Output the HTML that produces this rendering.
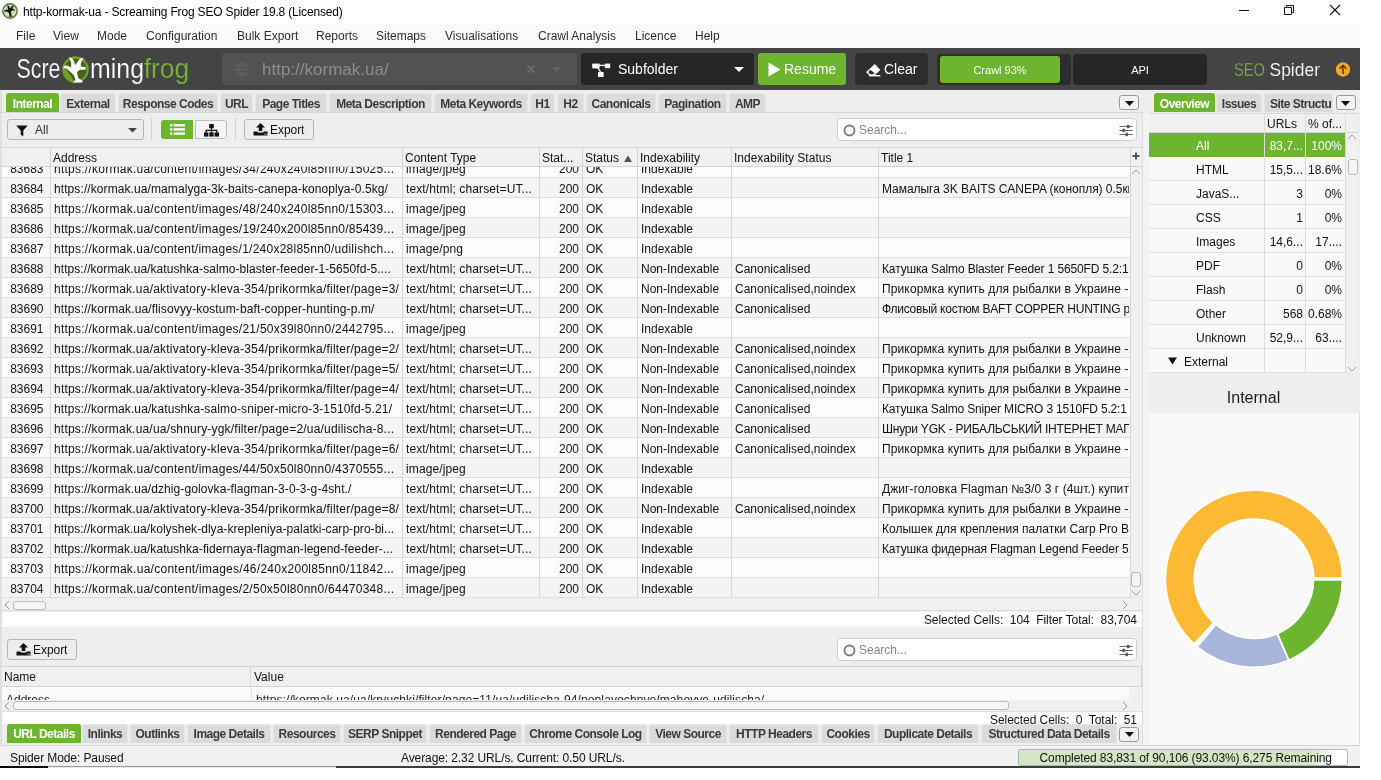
<!DOCTYPE html>
<html lang="en"><head><meta charset="utf-8"><title>http-kormak-ua - Screaming Frog SEO Spider 19.8 (Licensed)</title>
<style>
*{box-sizing:border-box;margin:0;padding:0}
html,body{width:1381px;height:780px;overflow:hidden;background:#fff}
body{font-family:"Liberation Sans",Arial,sans-serif;font-size:12px;color:#111;position:relative}
#app div,#app span{position:absolute;white-space:nowrap}
#app{position:absolute;left:0;top:0;width:1360px;height:768px;background:#eeeeee;overflow:hidden}
#w{left:0;top:0;width:1360px;height:768px;will-change:transform}
#titlebar{left:0;top:0;width:1360px;height:24px;background:#fff}
#titlebar .t{left:23px;top:0;line-height:25px;font-size:12px;letter-spacing:-0.17px;color:#000}
#menubar{left:0;top:24px;width:1360px;height:24px;background:#fbfbfb}
#menubar span{top:0;line-height:25px;font-size:12px;color:#2e2e2e}
#toolbar{left:0;top:48px;width:1360px;height:42px;background:#444444}
#toolbar .box{border-radius:3px}
#toolbar .lbl{color:#fff;font-size:14px;top:0;line-height:33px}
.tab{background:#dbdbdb;color:#3a3a3a;font-weight:700;font-size:12px;letter-spacing:-0.5px;text-align:center;border-radius:3px 3px 0 0;border:1px solid #e6e6e6;border-bottom:none}
.tab.act{background:#6db52f;color:#fff;border-color:#6db52f}
.hline{height:1px;background:#d6d6d6}
.btn{border:1px solid #b4b4b4;border-radius:3px;background:#ededed}
.dropbtn{width:20px;height:15px;border:1px solid #9a9a9a;border-radius:3px;background:#f3f3f3}
.search{left:837px;width:300px;height:23px;background:#fff;border:1px solid #cfcfcf;border-radius:4px}
.search .ph{left:21px;top:0;line-height:22px;color:#858585;font-size:12px}
#grid{left:2px;top:146.5px;width:1140px;height:451px;background:#fff;overflow:hidden}
#grid .r{left:0;width:1128px;height:20px;border-bottom:1px solid #dedede}
#grid .r.a{background:#f4f4f4}
#grid .r.b{background:#fcfcfc}
#grid .c{top:0;height:19px;line-height:22px;overflow:hidden;font-size:12px;color:#111}
#grid .c.n{text-align:right}
#grid .h{top:0;height:20.5px;background:#f0f0f0;border-right:1px solid #d2d2d2;border-bottom:1px solid #d2d2d2;border-top:1px solid #d9d9d9;z-index:3}
#grid .h span{left:2px;top:0;line-height:21px;font-size:12px;color:#111}
.vl{width:1px;background:#d6d6d6;z-index:2}
.vl2{width:1px;background:#dcdcdc;z-index:2}
.ovr{left:1149px;width:196px;height:24px;border-bottom:1px solid #e0e0e0;background:#f9f9f9}
  .ovr span{top:0;line-height:27px;font-size:12px}
.ovr .u{left:116px;width:38px;text-align:right}
.ovr .p{left:157px;width:36px;text-align:right}
.ovr.act{background:#6db52f;color:#fff;border-bottom-color:#6db52f}
.sb{background:#f0f0f0}
.thumb{background:#f6f6f6;border:1px solid #b9b9b9;border-radius:3px}
.chev{font-size:11px;color:#8a8a8a;line-height:12px}
</style></head><body>
<div id="app"><div id="w">
<div id="titlebar">
<svg style="position:absolute;left:2px;top:3px" width="16" height="16" viewBox="0 0 16 16"><circle cx="8" cy="8" r="7.2" fill="#cfdcb4" stroke="#5d7431" stroke-width="1.4"/><path d="M5.2 2.2 L7 3 L8 5.6 L10.6 2.6 L11.8 3 L10.4 5.6 L12.6 6.6 L12.8 7.6 L10 7.4 L9 9 L9.4 12.4 L11.4 13.6 L6.6 13.8 L7.6 12.4 L6.6 9.4 L4.4 8.2 L2.4 9 L2.2 7.8 L4.6 6.4 L6.4 6.8 L5.6 4.4 Z" fill="#0c1405"/></svg>
<span class="t">http-kormak-ua - Screaming Frog SEO Spider 19.8 (Licensed)</span>
<svg style="position:absolute;left:1235px;top:0" width="110" height="24" viewBox="0 0 110 24"><g stroke="#111" stroke-width="1" fill="none"><path d="M4 10.5H14"/><path d="M49.5 7.5H56.5V14.5H49.5Z"/><path d="M51.5 7.5V5.5H58.5V12.5H56.5"/><path d="M95 5L105 15M105 5L95 15" stroke-width="1.1"/></g></svg>
</div>
<div id="menubar"><span style="left:16px">File</span><span style="left:53px">View</span><span style="left:97px">Mode</span><span style="left:146px">Configuration</span><span style="left:237px">Bulk Export</span><span style="left:316px">Reports</span><span style="left:376px">Sitemaps</span><span style="left:445px">Visualisations</span><span style="left:538px">Crawl Analysis</span><span style="left:635px">Licence</span><span style="left:695px">Help</span></div>
<div id="toolbar">
<svg style="position:absolute;left:14px;top:5px" width="180" height="34" viewBox="0 0 180 34">
<text x="2.5" y="25.2" font-family="Liberation Sans, Arial, sans-serif" font-size="28" fill="#fff" stroke="#444" stroke-width="0.2" textLength="44" lengthAdjust="spacingAndGlyphs">Scre</text>
<circle cx="61.5" cy="16.6" r="12.2" fill="#47641c" stroke="#6ea525" stroke-width="2.2"/>
<path d="M49.8 13 A12.2 12.2 0 0 0 60 28.6 L56 22 Z" fill="#6ea525"/>
<path d="M55 4.2 L58.6 5.4 L61.4 12 L66 5.6 L69.6 5 L67.2 9.2 L66.6 13.4 L71.8 14 L71.4 16.8 L66 16.8 L63 19 L64.2 25 L68.4 27.8 L68.6 29.6 L59 29.6 L61.4 27 L60.2 22.4 L56 18.4 L51.6 15 L49.4 15.6 L49.8 13 L53.2 12.4 L57.2 14.4 L57.2 9.4 Z" fill="#fff"/>
<text x="76" y="25.2" font-family="Liberation Sans, Arial, sans-serif" font-size="28" fill="#fff" stroke="#444" stroke-width="0.2" textLength="54" lengthAdjust="spacingAndGlyphs">ming</text>
<text x="129.7" y="25.2" font-family="Liberation Sans, Arial, sans-serif" font-size="28" fill="#76b531" stroke="#444" stroke-width="0.2" textLength="45.5" lengthAdjust="spacingAndGlyphs">frog</text>
</svg>
<div class="box" style="left:222px;top:5px;width:355px;height:32px;background:#525252">
<svg style="position:absolute;left:12px;top:9px" width="15" height="15" viewBox="0 0 15 15"><circle cx="7.5" cy="7.5" r="7" fill="#5e5e5e"/><path d="M1 5.5H14M1 9.5H14" stroke="#525252" stroke-width="1.4"/></svg>
<span style="left:40px;top:0;line-height:33px;font-size:17px;color:#8d8d8d">http://kormak.ua/</span>
<svg style="position:absolute;left:304px;top:11px" width="10" height="10" viewBox="0 0 10 10"><path d="M1.5 1.5L8.5 8.5M8.5 1.5L1.5 8.5" stroke="#6b6b6b" stroke-width="2.2"/></svg>
<svg style="position:absolute;left:330px;top:14px" width="9" height="5" viewBox="0 0 9 5"><path d="M0 0H9L4.5 5Z" fill="#666"/></svg>
</div>
<div class="box" style="left:581px;top:5px;width:173px;height:32px;background:#262626">
<svg style="position:absolute;left:11px;top:9px" width="19" height="15" viewBox="0 0 19 15"><g fill="#fff"><rect x="0.2" y="1.6" width="7.4" height="4.8"/><rect x="12.8" y="1.6" width="5.4" height="4.6"/><rect x="6" y="10" width="5.6" height="5"/></g><path d="M5 3.4H13.5M5.5 5L8.8 10.5" stroke="#fff" stroke-width="1.4" fill="none"/></svg>
<span class="lbl" style="left:37px">Subfolder</span>
<svg style="position:absolute;left:153px;top:14px" width="10" height="5" viewBox="0 0 10 5"><path d="M0 0H10L5 5Z" fill="#fff"/></svg>
</div>
<div class="box" style="left:758px;top:5px;width:88px;height:32px;background:#6db52f">
<svg style="position:absolute;left:10px;top:9px" width="13" height="15" viewBox="0 0 13 15"><path d="M0.5 0.5 L12.5 7.5 L0.5 14.5 Z" fill="#fff"/></svg>
<span class="lbl" style="left:26px">Resume</span>
</div>
<div class="box" style="left:855px;top:5px;width:73px;height:32px;background:#2d2d2d;border-radius:4px">
<svg style="position:absolute;left:11px;top:10.5px" width="15" height="13" viewBox="0 0 15 13"><path d="M8.8 0 L14.3 5.9 L9 11 H3.2 L0 8.3 Z" fill="#fff"/><path d="M4.3 5.8 L8.6 9.3 L7.4 10.3 H4.2 L2.1 8.3 Z" fill="#2d2d2d"/><path d="M3 11.7 H14.3" stroke="#fff" stroke-width="1.4"/></svg>
<span class="lbl" style="left:29px">Clear</span>
</div>
<div class="box" style="left:937px;top:6px;width:134px;height:31px;background:#2d2d2d;border-radius:4px"></div>
<div class="box" style="left:940px;top:8px;width:120px;height:27px;background:#6db52f"><span style="left:0;width:120px;text-align:center;top:0;line-height:28px;font-size:11px;color:#fff">Crawl 93%</span></div>
<div class="box" style="left:1073px;top:6px;width:134px;height:31px;background:#262626;border-radius:4px"><span style="left:0;width:134px;text-align:center;top:0;line-height:32px;font-size:11px;color:#fff">API</span></div>
<svg style="position:absolute;left:1230px;top:8px" width="125" height="30" viewBox="0 0 125 30">
<text x="4" y="19.8" font-family="Liberation Sans, Arial, sans-serif" font-size="18" fill="#8ab34a" stroke="#444" stroke-width="0.35" textLength="31" lengthAdjust="spacingAndGlyphs">SEO</text>
<text x="39.5" y="19.8" font-family="Liberation Sans, Arial, sans-serif" font-size="18" fill="#fff" stroke="#444" stroke-width="0.15" textLength="50.5" lengthAdjust="spacingAndGlyphs">Spider</text>
<circle cx="113" cy="13.5" r="7.2" fill="#f5a623"/><path d="M113 18V10M109.6 12.8L113 9.4L116.4 12.8" stroke="#4a3a1a" stroke-width="1.5" fill="none"/>
</svg>
</div>
<!-- left edge strip -->
<div style="left:0;top:90px;width:2px;height:655px;background:#e0e0e0"></div>
<!-- top tabs -->
<div class="tab act" style="left:6px;top:93px;width:53px;height:19px;line-height:21px">Internal</div>
<div class="tab" style="left:60px;top:93px;width:56px;height:19px;line-height:21px">External</div>
<div class="tab" style="left:118px;top:93px;width:100px;height:19px;line-height:21px">Response Codes</div>
<div class="tab" style="left:220px;top:93px;width:33px;height:19px;line-height:21px">URL</div>
<div class="tab" style="left:255px;top:93px;width:72px;height:19px;line-height:21px">Page Titles</div>
<div class="tab" style="left:329px;top:93px;width:103px;height:19px;line-height:21px">Meta Description</div>
<div class="tab" style="left:434px;top:93px;width:94px;height:19px;line-height:21px">Meta Keywords</div>
<div class="tab" style="left:530px;top:93px;width:25px;height:19px;line-height:21px">H1</div>
<div class="tab" style="left:557px;top:93px;width:27px;height:19px;line-height:21px">H2</div>
<div class="tab" style="left:586px;top:93px;width:70px;height:19px;line-height:21px">Canonicals</div>
<div class="tab" style="left:658px;top:93px;width:69px;height:19px;line-height:21px">Pagination</div>
<div class="tab" style="left:729px;top:93px;width:37px;height:19px;line-height:21px">AMP</div>
<div class="dropbtn" style="left:1119px;top:95px"><svg style="position:absolute;left:4.5px;top:4.5px" width="9" height="5" viewBox="0 0 9 5"><path d="M0 0H9L4.5 5Z" fill="#111"/></svg></div>
<div class="hline" style="left:0;top:112px;width:1143px"></div>
<!-- filter row -->
<div class="btn" style="left:7px;top:119px;width:137px;height:21px">
<svg style="position:absolute;left:8px;top:4.5px" width="12" height="12" viewBox="0 0 12 12"><path d="M0.3 0.5 H11.7 L7.3 5.6 V11.5 L4.7 9.6 V5.6 Z" fill="#111"/></svg>
<span style="left:27px;top:0;line-height:20px;color:#333">All</span>
<svg style="position:absolute;left:120px;top:8px" width="9" height="5" viewBox="0 0 9 5"><path d="M0 0H9L4.5 4.6Z" fill="#444"/></svg>
</div>
<div style="left:151px;top:118px;width:1px;height:22px;background:#d3d3d3"></div>
<div style="left:161px;top:120px;width:32px;height:19px;background:#6db52f;border-radius:3px 0 0 3px">
<svg style="position:absolute;left:9px;top:4px" width="15" height="11" viewBox="0 0 15 11"><g fill="#fff"><rect x="0" y="0" width="2.2" height="2.4"/><rect x="3.6" y="0" width="11.4" height="2.4"/><rect x="0" y="4.2" width="2.2" height="2.4"/><rect x="3.6" y="4.2" width="11.4" height="2.4"/><rect x="0" y="8.4" width="2.2" height="2.4"/><rect x="3.6" y="8.4" width="11.4" height="2.4"/></g></svg>
</div>
<div style="left:195px;top:120px;width:32px;height:19px;background:#f5f5f5;border:1px solid #bdbdbd;border-radius:0 3px 3px 0">
<svg style="position:absolute;left:8px;top:2.5px" width="15" height="13" viewBox="0 0 15 13"><g fill="#111"><rect x="5.2" y="0" width="4.6" height="4.2"/><rect x="0" y="8.4" width="4.4" height="4.2"/><rect x="5.3" y="8.4" width="4.4" height="4.2"/><rect x="10.6" y="8.4" width="4.4" height="4.2"/></g><path d="M7.5 4V8.4M2.2 8.4V6.3H12.8V8.4" stroke="#111" stroke-width="1.3" fill="none"/></svg>
</div>
<div style="left:235px;top:118px;width:1px;height:22px;background:#d3d3d3"></div>
<div class="btn" style="left:244px;top:119px;width:70px;height:21px"><svg style="position:absolute;left:8px;top:3px" width="15" height="13" viewBox="0 0 15 13"><path d="M7.5 0 L12 4.6 H9.3 V8 H5.7 V4.6 H3 Z" fill="#111"/><path d="M0.5 8.6 H4.6 V9.4 H10.4 V8.6 H14.5 V12.6 H0.5 Z" fill="#111"/><rect x="11.3" y="10.6" width="1" height="1" fill="#eee"/><rect x="12.8" y="10.6" width="1" height="1" fill="#eee"/></svg><span style="left:25px;top:0;line-height:20px;letter-spacing:-0.05px">Export</span></div>
<div class="search" style="top:118px"><svg style="position:absolute;left:5px;top:5px" width="13" height="13" viewBox="0 0 13 13"><circle cx="6.5" cy="6.5" r="5" fill="none" stroke="#7c7c7c" stroke-width="1.8"/></svg><span class="ph">Search...</span><svg style="position:absolute;left:281px;top:5px" width="14" height="13" viewBox="0 0 14 13"><g stroke="#666" stroke-width="1.2" fill="none"><path d="M0.5 2.5H13.5M0.5 6.5H13.5M0.5 10.5H13.5"/></g><g fill="#555"><rect x="8" y="0.8" width="2.4" height="3.4"/><rect x="3.5" y="4.8" width="2.4" height="3.4"/><rect x="6.5" y="8.8" width="2.4" height="3.4"/></g></svg></div>
<!-- grid -->
<div id="grid">
<div class="h" style="left:0px;width:49px"><span></span></div>
<div class="h" style="left:49px;width:352px"><span>Address</span></div>
<div class="h" style="left:401px;width:137px"><span>Content Type</span></div>
<div class="h" style="left:538px;width:43px"><span>Stat...</span></div>
<div class="h" style="left:581px;width:55px"><span>Status</span><svg style="position:absolute;left:40px;top:7px" width="10" height="8" viewBox="0 0 10 8"><path d="M1 7 L5 0.5 L9 7 Z" fill="#555"/></svg></div>
<div class="h" style="left:636px;width:94px"><span>Indexability</span></div>
<div class="h" style="left:730px;width:147px"><span>Indexability Status</span></div>
<div class="h" style="left:877px;width:252px"><span>Title 1</span></div>
<div class="h" style="left:1129px;width:12px"><span></span></div>
<div class="r b" style="top:11.5px"><span class="c n" style="left:0;width:41.5px">83683</span><span class="c" style="left:52px;width:349px;letter-spacing:0.253px">https://kormak.ua/content/images/34/240x240l85nn0/15025...</span><span class="c" style="left:404px;width:134px;letter-spacing:0.12px">image/jpeg</span><span class="c n" style="left:538px;width:39px">200</span><span class="c" style="left:584px;width:52px">OK</span><span class="c" style="left:639px;width:92px">Indexable</span><span class="c" style="left:733px;width:144px"></span><span class="c" style="left:880px;width:247px;letter-spacing:0px"></span></div>
<div class="r a" style="top:31.5px"><span class="c n" style="left:0;width:41.5px">83684</span><span class="c" style="left:52px;width:349px;letter-spacing:0.088px">https://kormak.ua/mamalyga-3k-baits-canepa-konoplya-0.5kg/</span><span class="c" style="left:404px;width:134px;letter-spacing:0.12px">text/html; charset=UT...</span><span class="c n" style="left:538px;width:39px">200</span><span class="c" style="left:584px;width:52px">OK</span><span class="c" style="left:639px;width:92px">Indexable</span><span class="c" style="left:733px;width:144px"></span><span class="c" style="left:880px;width:247px;letter-spacing:-0.042px">Мамалыга 3K BAITS CANEPA (конопля) 0.5кг</span></div>
<div class="r b" style="top:51.5px"><span class="c n" style="left:0;width:41.5px">83685</span><span class="c" style="left:52px;width:349px;letter-spacing:0.253px">https://kormak.ua/content/images/48/240x240l85nn0/15303...</span><span class="c" style="left:404px;width:134px;letter-spacing:0.12px">image/jpeg</span><span class="c n" style="left:538px;width:39px">200</span><span class="c" style="left:584px;width:52px">OK</span><span class="c" style="left:639px;width:92px">Indexable</span><span class="c" style="left:733px;width:144px"></span><span class="c" style="left:880px;width:247px;letter-spacing:0px"></span></div>
<div class="r a" style="top:71.5px"><span class="c n" style="left:0;width:41.5px">83686</span><span class="c" style="left:52px;width:349px;letter-spacing:0.253px">https://kormak.ua/content/images/19/240x200l85nn0/85439...</span><span class="c" style="left:404px;width:134px;letter-spacing:0.12px">image/jpeg</span><span class="c n" style="left:538px;width:39px">200</span><span class="c" style="left:584px;width:52px">OK</span><span class="c" style="left:639px;width:92px">Indexable</span><span class="c" style="left:733px;width:144px"></span><span class="c" style="left:880px;width:247px;letter-spacing:0px"></span></div>
<div class="r b" style="top:91.5px"><span class="c n" style="left:0;width:41.5px">83687</span><span class="c" style="left:52px;width:349px;letter-spacing:0.245px">https://kormak.ua/content/images/1/240x28l85nn0/udilishch...</span><span class="c" style="left:404px;width:134px;letter-spacing:0.12px">image/png</span><span class="c n" style="left:538px;width:39px">200</span><span class="c" style="left:584px;width:52px">OK</span><span class="c" style="left:639px;width:92px">Indexable</span><span class="c" style="left:733px;width:144px"></span><span class="c" style="left:880px;width:247px;letter-spacing:0px"></span></div>
<div class="r a" style="top:111.5px"><span class="c n" style="left:0;width:41.5px">83688</span><span class="c" style="left:52px;width:349px;letter-spacing:0.064px">https://kormak.ua/katushka-salmo-blaster-feeder-1-5650fd-5....</span><span class="c" style="left:404px;width:134px;letter-spacing:0.12px">text/html; charset=UT...</span><span class="c n" style="left:538px;width:39px">200</span><span class="c" style="left:584px;width:52px">OK</span><span class="c" style="left:639px;width:92px">Non-Indexable</span><span class="c" style="left:733px;width:144px">Canonicalised</span><span class="c" style="left:880px;width:247px;letter-spacing:-0.135px">Катушка Salmo Blaster Feeder 1 5650FD 5.2:1</span></div>
<div class="r b" style="top:131.5px"><span class="c n" style="left:0;width:41.5px">83689</span><span class="c" style="left:52px;width:349px;letter-spacing:0.212px">https://kormak.ua/aktivatory-kleva-354/prikormka/filter/page=3/</span><span class="c" style="left:404px;width:134px;letter-spacing:0.12px">text/html; charset=UT...</span><span class="c n" style="left:538px;width:39px">200</span><span class="c" style="left:584px;width:52px">OK</span><span class="c" style="left:639px;width:92px">Non-Indexable</span><span class="c" style="left:733px;width:144px">Canonicalised,noindex</span><span class="c" style="left:880px;width:247px;letter-spacing:0.123px">Прикормка купить для рыбалки в Украине - </span></div>
<div class="r a" style="top:151.5px"><span class="c n" style="left:0;width:41.5px">83690</span><span class="c" style="left:52px;width:349px;letter-spacing:0.133px">https://kormak.ua/flisovyy-kostum-baft-copper-hunting-p.m/</span><span class="c" style="left:404px;width:134px;letter-spacing:0.12px">text/html; charset=UT...</span><span class="c n" style="left:538px;width:39px">200</span><span class="c" style="left:584px;width:52px">OK</span><span class="c" style="left:639px;width:92px">Non-Indexable</span><span class="c" style="left:733px;width:144px">Canonicalised</span><span class="c" style="left:880px;width:247px;letter-spacing:-0.241px">Флисовый костюм BAFT COPPER HUNTING р.</span></div>
<div class="r b" style="top:171.5px"><span class="c n" style="left:0;width:41.5px">83691</span><span class="c" style="left:52px;width:349px;letter-spacing:0.253px">https://kormak.ua/content/images/21/50x39l80nn0/2442795...</span><span class="c" style="left:404px;width:134px;letter-spacing:0.12px">image/jpeg</span><span class="c n" style="left:538px;width:39px">200</span><span class="c" style="left:584px;width:52px">OK</span><span class="c" style="left:639px;width:92px">Indexable</span><span class="c" style="left:733px;width:144px"></span><span class="c" style="left:880px;width:247px;letter-spacing:0px"></span></div>
<div class="r a" style="top:191.5px"><span class="c n" style="left:0;width:41.5px">83692</span><span class="c" style="left:52px;width:349px;letter-spacing:0.212px">https://kormak.ua/aktivatory-kleva-354/prikormka/filter/page=2/</span><span class="c" style="left:404px;width:134px;letter-spacing:0.12px">text/html; charset=UT...</span><span class="c n" style="left:538px;width:39px">200</span><span class="c" style="left:584px;width:52px">OK</span><span class="c" style="left:639px;width:92px">Non-Indexable</span><span class="c" style="left:733px;width:144px">Canonicalised,noindex</span><span class="c" style="left:880px;width:247px;letter-spacing:0.123px">Прикормка купить для рыбалки в Украине - </span></div>
<div class="r b" style="top:211.5px"><span class="c n" style="left:0;width:41.5px">83693</span><span class="c" style="left:52px;width:349px;letter-spacing:0.212px">https://kormak.ua/aktivatory-kleva-354/prikormka/filter/page=5/</span><span class="c" style="left:404px;width:134px;letter-spacing:0.12px">text/html; charset=UT...</span><span class="c n" style="left:538px;width:39px">200</span><span class="c" style="left:584px;width:52px">OK</span><span class="c" style="left:639px;width:92px">Non-Indexable</span><span class="c" style="left:733px;width:144px">Canonicalised,noindex</span><span class="c" style="left:880px;width:247px;letter-spacing:0.123px">Прикормка купить для рыбалки в Украине - </span></div>
<div class="r a" style="top:231.5px"><span class="c n" style="left:0;width:41.5px">83694</span><span class="c" style="left:52px;width:349px;letter-spacing:0.212px">https://kormak.ua/aktivatory-kleva-354/prikormka/filter/page=4/</span><span class="c" style="left:404px;width:134px;letter-spacing:0.12px">text/html; charset=UT...</span><span class="c n" style="left:538px;width:39px">200</span><span class="c" style="left:584px;width:52px">OK</span><span class="c" style="left:639px;width:92px">Non-Indexable</span><span class="c" style="left:733px;width:144px">Canonicalised,noindex</span><span class="c" style="left:880px;width:247px;letter-spacing:0.123px">Прикормка купить для рыбалки в Украине - </span></div>
<div class="r b" style="top:251.5px"><span class="c n" style="left:0;width:41.5px">83695</span><span class="c" style="left:52px;width:349px;letter-spacing:0.11px">https://kormak.ua/katushka-salmo-sniper-micro-3-1510fd-5.21/</span><span class="c" style="left:404px;width:134px;letter-spacing:0.12px">text/html; charset=UT...</span><span class="c n" style="left:538px;width:39px">200</span><span class="c" style="left:584px;width:52px">OK</span><span class="c" style="left:639px;width:92px">Non-Indexable</span><span class="c" style="left:733px;width:144px">Canonicalised</span><span class="c" style="left:880px;width:247px;letter-spacing:-0.166px">Катушка Salmo Sniper MICRO 3 1510FD 5.2:1</span></div>
<div class="r a" style="top:271.5px"><span class="c n" style="left:0;width:41.5px">83696</span><span class="c" style="left:52px;width:349px;letter-spacing:0.196px">https://kormak.ua/ua/shnury-ygk/filter/page=2/ua/udilischa-8...</span><span class="c" style="left:404px;width:134px;letter-spacing:0.12px">text/html; charset=UT...</span><span class="c n" style="left:538px;width:39px">200</span><span class="c" style="left:584px;width:52px">OK</span><span class="c" style="left:639px;width:92px">Non-Indexable</span><span class="c" style="left:733px;width:144px">Canonicalised</span><span class="c" style="left:880px;width:247px;letter-spacing:-0.222px">Шнури YGK - РИБАЛЬСЬКИЙ ІНТЕРНЕТ МАГАЗИН</span></div>
<div class="r b" style="top:291.5px"><span class="c n" style="left:0;width:41.5px">83697</span><span class="c" style="left:52px;width:349px;letter-spacing:0.212px">https://kormak.ua/aktivatory-kleva-354/prikormka/filter/page=6/</span><span class="c" style="left:404px;width:134px;letter-spacing:0.12px">text/html; charset=UT...</span><span class="c n" style="left:538px;width:39px">200</span><span class="c" style="left:584px;width:52px">OK</span><span class="c" style="left:639px;width:92px">Non-Indexable</span><span class="c" style="left:733px;width:144px">Canonicalised,noindex</span><span class="c" style="left:880px;width:247px;letter-spacing:0.123px">Прикормка купить для рыбалки в Украине - </span></div>
<div class="r a" style="top:311.5px"><span class="c n" style="left:0;width:41.5px">83698</span><span class="c" style="left:52px;width:349px;letter-spacing:0.253px">https://kormak.ua/content/images/44/50x50l80nn0/4370555...</span><span class="c" style="left:404px;width:134px;letter-spacing:0.12px">image/jpeg</span><span class="c n" style="left:538px;width:39px">200</span><span class="c" style="left:584px;width:52px">OK</span><span class="c" style="left:639px;width:92px">Indexable</span><span class="c" style="left:733px;width:144px"></span><span class="c" style="left:880px;width:247px;letter-spacing:0px"></span></div>
<div class="r b" style="top:331.5px"><span class="c n" style="left:0;width:41.5px">83699</span><span class="c" style="left:52px;width:349px;letter-spacing:0.098px">https://kormak.ua/dzhig-golovka-flagman-3-0-3-g-4sht./</span><span class="c" style="left:404px;width:134px;letter-spacing:0.12px">text/html; charset=UT...</span><span class="c n" style="left:538px;width:39px">200</span><span class="c" style="left:584px;width:52px">OK</span><span class="c" style="left:639px;width:92px">Indexable</span><span class="c" style="left:733px;width:144px"></span><span class="c" style="left:880px;width:247px;letter-spacing:0.088px">Джиг-головка Flagman №3/0 3 г (4шт.) купить</span></div>
<div class="r a" style="top:351.5px"><span class="c n" style="left:0;width:41.5px">83700</span><span class="c" style="left:52px;width:349px;letter-spacing:0.212px">https://kormak.ua/aktivatory-kleva-354/prikormka/filter/page=8/</span><span class="c" style="left:404px;width:134px;letter-spacing:0.12px">text/html; charset=UT...</span><span class="c n" style="left:538px;width:39px">200</span><span class="c" style="left:584px;width:52px">OK</span><span class="c" style="left:639px;width:92px">Non-Indexable</span><span class="c" style="left:733px;width:144px">Canonicalised,noindex</span><span class="c" style="left:880px;width:247px;letter-spacing:0.123px">Прикормка купить для рыбалки в Украине - </span></div>
<div class="r b" style="top:371.5px"><span class="c n" style="left:0;width:41.5px">83701</span><span class="c" style="left:52px;width:349px;letter-spacing:0.042px">https://kormak.ua/kolyshek-dlya-krepleniya-palatki-carp-pro-bi...</span><span class="c" style="left:404px;width:134px;letter-spacing:0.12px">text/html; charset=UT...</span><span class="c n" style="left:538px;width:39px">200</span><span class="c" style="left:584px;width:52px">OK</span><span class="c" style="left:639px;width:92px">Indexable</span><span class="c" style="left:733px;width:144px"></span><span class="c" style="left:880px;width:247px;letter-spacing:0.015px">Колышек для крепления палатки Carp Pro Big</span></div>
<div class="r a" style="top:391.5px"><span class="c n" style="left:0;width:41.5px">83702</span><span class="c" style="left:52px;width:349px;letter-spacing:0.055px">https://kormak.ua/katushka-fidernaya-flagman-legend-feeder-...</span><span class="c" style="left:404px;width:134px;letter-spacing:0.12px">text/html; charset=UT...</span><span class="c n" style="left:538px;width:39px">200</span><span class="c" style="left:584px;width:52px">OK</span><span class="c" style="left:639px;width:92px">Indexable</span><span class="c" style="left:733px;width:144px"></span><span class="c" style="left:880px;width:247px;letter-spacing:-0.129px">Катушка фидерная Flagman Legend Feeder 50</span></div>
<div class="r b" style="top:411.5px"><span class="c n" style="left:0;width:41.5px">83703</span><span class="c" style="left:52px;width:349px;letter-spacing:0.268px">https://kormak.ua/content/images/46/240x200l85nn0/11842...</span><span class="c" style="left:404px;width:134px;letter-spacing:0.12px">image/jpeg</span><span class="c n" style="left:538px;width:39px">200</span><span class="c" style="left:584px;width:52px">OK</span><span class="c" style="left:639px;width:92px">Indexable</span><span class="c" style="left:733px;width:144px"></span><span class="c" style="left:880px;width:247px;letter-spacing:0px"></span></div>
<div class="r a" style="top:431.5px"><span class="c n" style="left:0;width:41.5px">83704</span><span class="c" style="left:52px;width:349px;letter-spacing:0.253px">https://kormak.ua/content/images/2/50x50l80nn0/64470348...</span><span class="c" style="left:404px;width:134px;letter-spacing:0.12px">image/jpeg</span><span class="c n" style="left:538px;width:39px">200</span><span class="c" style="left:584px;width:52px">OK</span><span class="c" style="left:639px;width:92px">Indexable</span><span class="c" style="left:733px;width:144px"></span><span class="c" style="left:880px;width:247px;letter-spacing:0px"></span></div>
<div class="vl" style="left:48px;top:0;height:451px"></div>
<div class="vl" style="left:400px;top:0;height:451px"></div>
<div class="vl" style="left:537px;top:0;height:451px"></div>
<div class="vl" style="left:580px;top:0;height:451px"></div>
<div class="vl" style="left:635px;top:0;height:451px"></div>
<div class="vl" style="left:729px;top:0;height:451px"></div>
<div class="vl" style="left:876px;top:0;height:451px"></div>
<div class="vl" style="left:1128px;top:0;height:451px"></div>
</div>
<svg style="position:absolute;left:1132px;top:152px;z-index:5" width="8" height="8" viewBox="0 0 8 8"><path d="M4 0.5V7.5M0.5 4H7.5" stroke="#555" stroke-width="2"/></svg>
<!-- grid vertical scrollbar -->
<div class="sb" style="left:1130px;top:167px;width:12px;height:431px"></div>
<svg style="position:absolute;left:1131px;top:169px" width="10" height="6" viewBox="0 0 10 6"><path d="M1 5L5 1L9 5" stroke="#999" stroke-width="1" fill="none"/></svg>
<div class="thumb" style="left:1131px;top:572px;width:10px;height:15px"></div>
<svg style="position:absolute;left:1131px;top:590px" width="10" height="6" viewBox="0 0 10 6"><path d="M1 1L5 5L9 1" stroke="#999" stroke-width="1" fill="none"/></svg>
<!-- grid horizontal scrollbar -->
<div class="sb" style="left:2px;top:598px;width:1140px;height:13px;border-bottom:1px solid #dcdcdc"></div>
<svg style="position:absolute;left:4px;top:600px" width="6" height="10" viewBox="0 0 6 10"><path d="M5 1L1 5L5 9" stroke="#999" stroke-width="1" fill="none"/></svg>
<div class="thumb" style="left:13px;top:600.5px;width:33px;height:9px"></div>
<svg style="position:absolute;left:1122px;top:600px" width="6" height="10" viewBox="0 0 6 10"><path d="M1 1L5 5L1 9" stroke="#999" stroke-width="1" fill="none"/></svg>
<!-- selected cells strip -->
<div style="left:2px;top:611.5px;width:1140px;height:15.5px;background:#fff"><span style="right:5px;top:0;line-height:17px;font-size:12px;letter-spacing:-0.05px">Selected Cells:&nbsp; 104&nbsp; Filter Total:&nbsp; 83,704</span></div>
<!-- lower panel -->
<div class="btn" style="left:7px;top:639px;width:70px;height:21px"><svg style="position:absolute;left:8px;top:3px" width="15" height="13" viewBox="0 0 15 13"><path d="M7.5 0 L12 4.6 H9.3 V8 H5.7 V4.6 H3 Z" fill="#111"/><path d="M0.5 8.6 H4.6 V9.4 H10.4 V8.6 H14.5 V12.6 H0.5 Z" fill="#111"/><rect x="11.3" y="10.6" width="1" height="1" fill="#eee"/><rect x="12.8" y="10.6" width="1" height="1" fill="#eee"/></svg><span style="left:25px;top:0;line-height:20px;letter-spacing:-0.05px">Export</span></div>
<div class="search" style="top:638px"><svg style="position:absolute;left:5px;top:5px" width="13" height="13" viewBox="0 0 13 13"><circle cx="6.5" cy="6.5" r="5" fill="none" stroke="#7c7c7c" stroke-width="1.8"/></svg><span class="ph">Search...</span><svg style="position:absolute;left:281px;top:5px" width="14" height="13" viewBox="0 0 14 13"><g stroke="#666" stroke-width="1.2" fill="none"><path d="M0.5 2.5H13.5M0.5 6.5H13.5M0.5 10.5H13.5"/></g><g fill="#555"><rect x="8" y="0.8" width="2.4" height="3.4"/><rect x="3.5" y="4.8" width="2.4" height="3.4"/><rect x="6.5" y="8.8" width="2.4" height="3.4"/></g></svg></div>
<div style="left:2px;top:666px;width:1140px;height:34px;background:#fbfbfb;overflow:hidden">
<div style="left:0;top:0;width:249px;height:20.5px;background:#f0f0f0;border:1px solid #d4d4d4;border-left:none"><span style="left:2px;top:0;line-height:21px">Name</span></div>
<div style="left:249px;top:0;width:891px;height:20.5px;background:#f0f0f0;border:1px solid #d4d4d4;border-left:none"><span style="left:3px;top:0;line-height:21px">Value</span></div>
<span style="left:4px;top:27px;line-height:14px;color:#222">Address</span>
<span style="left:254px;top:27px;line-height:14px;color:#222;letter-spacing:0.1px">https://kormak.ua/ua/kryuchki/filter/page=11/ua/udilischa-94/poplavochnye/mahovye-udilischa/</span>
<div style="left:249px;top:20px;width:1px;height:14px;background:#e2e2e2"></div>
<div style="left:1127px;top:20.5px;width:13px;height:14px;background:#f0f0f0"></div>
</div>
<div class="sb" style="left:2px;top:700px;width:1140px;height:11.5px;border-bottom:1px solid #dcdcdc"></div>
<svg style="position:absolute;left:4px;top:701px" width="6" height="10" viewBox="0 0 6 10"><path d="M5 1L1 5L5 9" stroke="#999" stroke-width="1" fill="none"/></svg>
<div class="thumb" style="left:13px;top:701px;width:996px;height:9px"></div>
<svg style="position:absolute;left:1122px;top:701px" width="6" height="10" viewBox="0 0 6 10"><path d="M1 1L5 5L1 9" stroke="#999" stroke-width="1" fill="none"/></svg>
<div style="left:2px;top:711.5px;width:1140px;height:12px;background:#fff;overflow:hidden"><span style="right:5px;top:0;line-height:17px;font-size:12px;letter-spacing:-0.05px">Selected Cells:&nbsp; 0&nbsp; Total:&nbsp; 51</span></div>
<div class="tab act" style="left:7px;top:723.5px;width:74px;height:19.5px;line-height:19.5px">URL Details</div>
<div class="tab" style="left:82px;top:723.5px;width:46px;height:19.5px;line-height:19.5px">Inlinks</div>
<div class="tab" style="left:130px;top:723.5px;width:55px;height:19.5px;line-height:19.5px">Outlinks</div>
<div class="tab" style="left:187px;top:723.5px;width:84px;height:19.5px;line-height:19.5px">Image Details</div>
<div class="tab" style="left:273px;top:723.5px;width:68px;height:19.5px;line-height:19.5px">Resources</div>
<div class="tab" style="left:343px;top:723.5px;width:84px;height:19.5px;line-height:19.5px">SERP Snippet</div>
<div class="tab" style="left:429px;top:723.5px;width:93px;height:19.5px;line-height:19.5px">Rendered Page</div>
<div class="tab" style="left:524px;top:723.5px;width:123px;height:19.5px;line-height:19.5px">Chrome Console Log</div>
<div class="tab" style="left:649px;top:723.5px;width:78px;height:19.5px;line-height:19.5px">View Source</div>
<div class="tab" style="left:729px;top:723.5px;width:90px;height:19.5px;line-height:19.5px">HTTP Headers</div>
<div class="tab" style="left:821px;top:723.5px;width:54px;height:19.5px;line-height:19.5px">Cookies</div>
<div class="tab" style="left:877px;top:723.5px;width:102px;height:19.5px;line-height:19.5px">Duplicate Details</div>
<div class="tab" style="left:981px;top:723.5px;width:136px;height:19.5px;line-height:19.5px">Structured Data Details</div>
<div class="dropbtn" style="left:1119px;top:726.5px"><svg style="position:absolute;left:4.5px;top:4.5px" width="9" height="5" viewBox="0 0 9 5"><path d="M0 0H9L4.5 5Z" fill="#111"/></svg></div>
<!-- splitter -->
<div style="left:1142px;top:113px;width:1px;height:632px;background:#dddddd"></div>
<div style="left:1143px;top:113px;width:6px;height:632px;background:#f3f3f3"></div>
<!-- right panel -->
<div class="tab act" style="left:1154px;top:93px;width:61px;height:19px;line-height:21px">Overview</div>
<div class="tab" style="left:1216px;top:93px;width:46px;height:19px;line-height:21px">Issues</div>
<div class="tab" style="left:1264px;top:93px;width:69px;height:19px;line-height:21px;overflow:hidden;text-align:left;padding-left:5px;border-radius:3px 0 0 0">Site Structure</div>
<div class="dropbtn" style="left:1335.5px;top:95px"><svg style="position:absolute;left:4.5px;top:4.5px" width="9" height="5" viewBox="0 0 9 5"><path d="M0 0H9L4.5 5Z" fill="#111"/></svg></div>
<div style="left:1149px;top:112.5px;width:209px;height:20.5px;background:#f0f0f0;border-top:1px solid #d6d6d6;border-bottom:1px solid #d6d6d6"><span style="left:118px;top:0;line-height:20px">URLs</span><span style="left:159px;top:0;line-height:20px">% of...</span></div>
<div class="ovr act" style="top:133px"><span style="left:47px">All</span><span class="u">83,7...</span><span class="p">100%</span></div>
<div class="ovr" style="top:157px"><span style="left:47px">HTML</span><span class="u">15,5...</span><span class="p">18.6%</span></div>
<div class="ovr" style="top:181px"><span style="left:47px">JavaS...</span><span class="u">3</span><span class="p">0%</span></div>
<div class="ovr" style="top:205px"><span style="left:47px">CSS</span><span class="u">1</span><span class="p">0%</span></div>
<div class="ovr" style="top:229px"><span style="left:47px">Images</span><span class="u">14,6...</span><span class="p">17....</span></div>
<div class="ovr" style="top:253px"><span style="left:47px">PDF</span><span class="u">0</span><span class="p">0%</span></div>
<div class="ovr" style="top:277px"><span style="left:47px">Flash</span><span class="u">0</span><span class="p">0%</span></div>
<div class="ovr" style="top:301px"><span style="left:47px">Other</span><span class="u">568</span><span class="p">0.68%</span></div>
<div class="ovr" style="top:325px"><span style="left:47px">Unknown</span><span class="u">52,9...</span><span class="p">63....</span></div>
<div class="ovr" style="top:349px"><svg style="position:absolute;left:19px;top:8px" width="9" height="8" viewBox="0 0 9 8"><path d="M0 0.5 H9 L4.5 7.5 Z" fill="#111"/></svg><span style="left:35px">External</span></div>
<div class="vl2" style="left:1264px;top:113px;height:260px"></div><div class="vl2" style="left:1305px;top:113px;height:260px"></div><div class="vl2" style="left:1345px;top:113px;height:260px"></div>
<div class="sb" style="left:1346px;top:133px;width:12px;height:240px;background:#f1f1f1"></div>
<svg style="position:absolute;left:1347px;top:134px" width="10" height="6" viewBox="0 0 10 6"><path d="M1 5L5 1L9 5" stroke="#999" stroke-width="1" fill="none"/></svg>
<div class="thumb" style="left:1348px;top:159px;width:9.5px;height:16px"></div>
<svg style="position:absolute;left:1347px;top:366px" width="10" height="6" viewBox="0 0 10 6"><path d="M1 1L5 5L9 1" stroke="#999" stroke-width="1" fill="none"/></svg>
<div style="left:1149px;top:387px;width:209px;text-align:center;font-size:16px;line-height:22px;color:#1c1c1c">Internal</div>
<div style="left:1149px;top:413px;width:211px;height:332px;background:#f9f9f9;border-right:1px solid #dcdcdc">
<svg style="position:absolute;left:0;top:0" width="210" height="332" viewBox="0 0 210 332"><path d="M193.60 165.70 A88.6 88.6 0 0 1 139.62 247.26 L128.29 220.56 A59.6 59.6 0 0 0 164.60 165.70 Z" fill="#6db52f" stroke="#fff" stroke-width="1.8"/><path d="M139.62 247.26 A88.6 88.6 0 0 1 48.05 233.57 L66.69 211.36 A59.6 59.6 0 0 0 128.29 220.56 Z" fill="#a8b5da" stroke="#fff" stroke-width="1.8"/><path d="M48.05 233.57 A88.6 88.6 0 0 1 45.14 231.02 L64.73 209.64 A59.6 59.6 0 0 0 66.69 211.36 Z" fill="#fdfdfd" stroke="#fff" stroke-width="1.8"/><path d="M45.14 231.02 A88.6 88.6 0 1 1 193.60 165.70 L164.60 165.70 A59.6 59.6 0 1 0 64.73 209.64 Z" fill="#fcb933" stroke="#fff" stroke-width="1.8"/><path d="M163.6 166.0 H194.6" stroke="#fdfdfd" stroke-width="3.4"/></svg>
</div>
<!-- status bar -->
<div style="left:0;top:745px;width:1360px;height:1px;background:#d4d4d4"></div>
<div style="left:0;top:746px;width:1360px;height:21px;background:#f1f1f1">
<span style="left:10px;top:0;line-height:25px;letter-spacing:-0.1px">Spider Mode: Paused</span>
<span style="left:401px;top:0;line-height:25px;letter-spacing:-0.1px">Average: 2.32 URL/s. Current: 0.50 URL/s.</span>
<div style="left:1017.5px;top:2.5px;width:330px;height:17.5px;background:#fff;border:1px solid #b5b5b5;border-radius:2px;overflow:hidden"><div style="left:0;top:0;width:318px;height:17px;background:linear-gradient(90deg,#d5e6c4 0,#d5e6c4 290px,#fff 318px)"></div><span style="left:21px;top:0;line-height:17px;letter-spacing:-0.1px">Completed 83,831 of 90,106 (93.03%) 6,275 Remaining</span></div>
</div>
<div style="left:0;top:766px;width:1360px;height:2px;background:#3c3c3c"></div>
<div style="left:0;top:766px;width:48px;height:2px;background:#0a0a0a"></div>
<div style="left:48px;top:766px;width:288px;height:2px;background:linear-gradient(#9a9a9a 0,#9a9a9a 1px,#e8e8e8 1px)"></div>
</div></div>
</body></html>
